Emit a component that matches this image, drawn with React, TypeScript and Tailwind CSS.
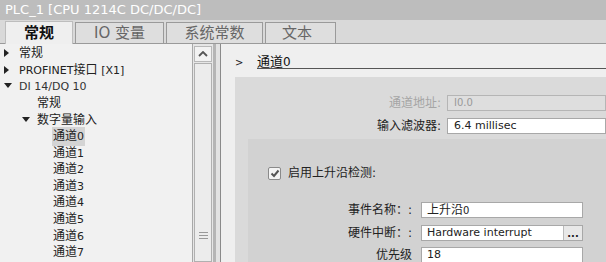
import React from "react";

const F = { fontFamily: '"DejaVu Sans", "Noto Sans CJK SC", sans-serif' };

function Tri({ down }: { down?: boolean }) {
  return down ? (
    <svg width="8" height="6" viewBox="0 0 8 6" className="shrink-0">
      <path d="M0 0 H8 L4 5 Z" fill="#222" />
    </svg>
  ) : (
    <svg width="6" height="8" viewBox="0 0 6 8" className="shrink-0">
      <path d="M0 0 V8 L5 4 Z" fill="#222" />
    </svg>
  );
}

function TreeRow({ indent, tri, children, selected }: { indent: number; tri?: "r" | "d"; children: React.ReactNode; selected?: boolean }) {
  return (
    <div className="flex h-[16.6px] items-center text-[12px] text-[#222]" style={{ paddingLeft: indent }}>
      <div className="w-[15px] flex items-center">{tri === "r" ? <Tri /> : tri === "d" ? <Tri down /> : null}</div>
      <span className={selected ? "bg-[#d4d4d4] px-[1px] -ml-[1px]" : ""}>{children}</span>
    </div>
  );
}

export default function App() {
  const channels = [0, 1, 2, 3, 4, 5, 6, 7];
  return (
    <div className="w-[606px] h-[262px] overflow-hidden bg-[#efefef] flex flex-col" style={F}>
      <div className="h-[20px] bg-[#bdbdbd] text-white text-[13px] leading-[20px] pl-[5px] shrink-0">PLC_1 [CPU 1214C DC/DC/DC]</div>
      <div className="h-[24px] bg-[#d9d9d9] border-b border-[#9a9a9a] flex items-end pl-[5px] gap-[2px] shrink-0">
        <div className="w-[68px] h-[23px] -mb-px bg-[#efefef] border border-b-0 border-[#bdbdbd] text-[15px] font-bold text-[#111] flex items-center justify-center">常规</div>
        <div className="w-[89px] h-[21px] bg-[#dedede] border border-b-0 border-[#9a9a9a] text-[15px] text-[#666] flex items-center justify-center">IO 变量</div>
        <div className="w-[97px] h-[21px] bg-[#dedede] border border-b-0 border-[#9a9a9a] text-[15px] text-[#666] flex items-center justify-center">系统常数</div>
        <div className="w-[71px] h-[21px] bg-[#dedede] border border-b-0 border-[#9a9a9a] text-[15px] text-[#666] flex items-center pl-[16px]">文本</div>
      </div>
      <div className="flex flex-1 min-h-0">
        <div className="w-[192px] pt-[1px] bg-[#f1f1f1]">
          <TreeRow indent={4} tri="r">常规</TreeRow>
          <TreeRow indent={4} tri="r"><span className="text-[11px]">PROFINET</span>接口 <span className="text-[11px]">[X1]</span></TreeRow>
          <TreeRow indent={4} tri="d"><span className="text-[11px] text-[#333]">DI 14/DQ 10</span></TreeRow>
          <TreeRow indent={22}>常规</TreeRow>
          <TreeRow indent={22} tri="d">数字量输入</TreeRow>
          {channels.map((c) => (
            <TreeRow key={c} indent={38} selected={c === 0}>
              通道<span className="text-[11px]">{c}</span>
            </TreeRow>
          ))}
        </div>
        <div className="w-[21px] border-l border-[#a8a8a8] bg-[#e6e6e6] flex flex-col pt-[2px] px-[1px]">
          <div className="h-[16px] border border-[#b8b8b8] bg-[#f2f2f2] flex items-center justify-center">
            <svg width="10" height="6" viewBox="0 0 10 6"><path d="M1 5 L5 1 L9 5" stroke="#555" strokeWidth="1.8" fill="none" /></svg>
          </div>
          <div className="flex-1 mt-[1px] border border-[#b0b0b0] bg-[#ececec] flex items-end justify-center pb-[22px]">
            <div className="flex flex-col gap-[2px]">
              <div className="w-[9px] h-px bg-[#999]" />
              <div className="w-[9px] h-px bg-[#999]" />
              <div className="w-[9px] h-px bg-[#999]" />
            </div>
          </div>
        </div>
        <div className="w-[8px] bg-[#e2e2e2] border-l-[3px] border-[#b5b5b5] border-r border-r-[#8a8a8a]" />
        <div className="flex-1 flex flex-col">
          <div className="h-[33px] flex items-start pt-[10px] pl-[14px] shrink-0">
            <span className="text-[10px] text-[#222] w-[22px] leading-[18px]">&gt;</span>
            <div className="flex-1 border-b border-[#555] h-[15px] text-[13px] text-[#111] leading-[16px]">通道<span className="text-[12px]">0</span></div>
          </div>
          <div className="ml-[14px] flex-1 bg-[#dadada] flex flex-col">
            <div className="h-[18px]" />
            <div className="flex items-center h-[16px] text-[12px]">
              <div className="w-[212px] text-right pr-[6px] text-[#a5a5a5]">通道地址:</div>
              <div className="flex-1 h-[16px] border border-[#b5b5b5] bg-[#dedede] text-[10px] text-[#999] pl-[6px] leading-[14px]">I0.0</div>
            </div>
            <div className="flex items-center h-[16px] mt-[7px] text-[12px]">
              <div className="w-[212px] text-right pr-[6px] text-[#222]">输入滤波器:</div>
              <div className="flex-1 h-[16px] border border-[#a8a8a8] bg-white text-[11px] text-[#222] pl-[6px] leading-[14px]">6.4 millisec</div>
            </div>
            <div className="ml-[13px] mt-[5px] flex-1 bg-[#d2d2d2] flex flex-col">
              <div className="flex items-center mt-[25px] pl-[20px] text-[12px] text-[#222]">
                <div className="w-[13px] h-[13px] border border-[#8a8a8a] bg-[#f4f4f4] rounded-[2px] flex items-center justify-center mr-[7px]">
                  <svg width="10" height="9" viewBox="0 0 10 9"><path d="M1.5 4.5 L4 7 L8.5 1.5" stroke="#555" strokeWidth="2" fill="none" /></svg>
                </div>
                启用上升沿检测:
              </div>
              <div className="flex items-center h-[16px] mt-[20px] text-[12px] text-[#222]">
                <div className="w-[173px] text-right pr-[9px]">事件名称：:</div>
                <div className="w-[162px] h-[16px] border border-[#a8a8a8] bg-white pl-[5px] leading-[14px]">上升沿<span className="text-[10px]">0</span></div>
              </div>
              <div className="flex items-center h-[16px] mt-[7px] text-[12px] text-[#222]">
                <div className="w-[173px] text-right pr-[9px]">硬件中断：:</div>
                <div className="w-[162px] h-[16px] border border-[#a8a8a8] bg-white pl-[5px] flex items-center">
                  <span className="flex-1 text-[11px] leading-[14px]">Hardware interrupt</span>
                  <div className="w-[19px] h-[14px] bg-[#e8e8e8] border-l border-[#bbb] text-[10px] leading-[16px] text-center font-bold">...</div>
                </div>
              </div>
              <div className="flex items-center h-[16px] mt-[6px] text-[12px] text-[#222]">
                <div className="w-[173px] text-right pr-[9px]">优先级</div>
                <div className="w-[162px] h-[16px] border border-[#a8a8a8] bg-white pl-[5px] text-[11px] leading-[14px]">18</div>
              </div>
            </div>
          </div>
        </div>
      </div>
    </div>
  );
}
